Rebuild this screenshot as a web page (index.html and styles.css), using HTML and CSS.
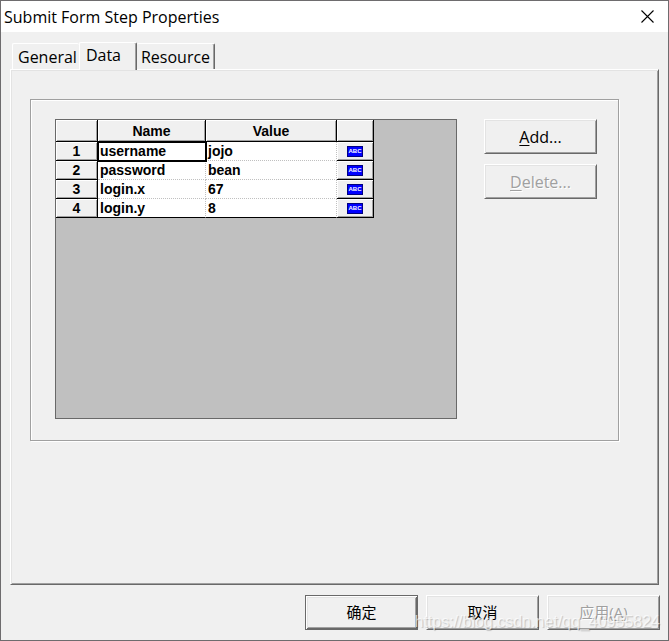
FILE: index.html
```html
<!DOCTYPE html>
<html lang="zh-CN">
  <head>
    <meta charset="UTF-8" />
    <meta name="viewport" content="width=device-width, initial-scale=1.0" />
    <title>Submit Form Step Properties</title>
    <link rel="stylesheet" href="styles.css">
  </head>
  <body>
    <div class="window">
      <header class="title-bar">
        <h1 class="title">Submit Form Step Properties</h1>
        <button type="button" class="close" aria-label="Close">
          <svg width="13" height="13" viewBox="0 0 13 13">
            <path d="M0.5 0.5 L12.5 12.5 M12.5 0.5 L0.5 12.5" fill="none" stroke="#000" stroke-width="1.1" />
          </svg>
        </button>
      </header>

      <main class="sheet">
        <div class="tabs" role="tablist">
          <button type="button" class="tab" role="tab">General</button>
          <button type="button" class="tab active" role="tab" aria-selected="true">Data</button>
          <button type="button" class="tab" role="tab">Resource</button>
        </div>

        <section class="panel" role="tabpanel">
          <div class="group">
            <div class="grid-view">
              <table class="grid">
                <colgroup>
                  <col class="col-index" />
                  <col class="col-name" />
                  <col class="col-value" />
                  <col class="col-type" />
                </colgroup>
                <thead>
                  <tr>
                    <th></th>
                    <th>Name</th>
                    <th>Value</th>
                    <th></th>
                  </tr>
                </thead>
                <tbody>
                  <tr>
                    <th>1</th>
                    <td class="selected">username</td>
                    <td>jojo</td>
                    <th><span class="type-icon">ABC</span></th>
                  </tr>
                  <tr>
                    <th>2</th>
                    <td>password</td>
                    <td>bean</td>
                    <th><span class="type-icon">ABC</span></th>
                  </tr>
                  <tr>
                    <th>3</th>
                    <td>login.x</td>
                    <td>67</td>
                    <th><span class="type-icon">ABC</span></th>
                  </tr>
                  <tr>
                    <th>4</th>
                    <td>login.y</td>
                    <td>8</td>
                    <th><span class="type-icon">ABC</span></th>
                  </tr>
                </tbody>
              </table>
            </div>

            <div class="actions">
              <button type="button" class="btn"><span><u>A</u>dd...</span></button>
              <button type="button" class="btn" disabled><span><u>D</u>elete...</span></button>
            </div>
          </div>
        </section>
      </main>

      <footer class="footer">
        <button type="button" class="btn default">确定</button>
        <button type="button" class="btn">取消</button>
        <button type="button" class="btn" disabled><span>应用(<u>A</u>)</span></button>
      </footer>

      <div class="watermark">https://blog.csdn.net/qq_40955824</div>
    </div>
  </body>
</html>
```

FILE: styles.css
```css
* {
  margin: 0;
  padding: 0;
  box-sizing: border-box;
}

body {
  font-family: "Open Sans", "Noto Sans CJK SC", sans-serif;
  font-size: 16px;
  color: #000000;
  background: #f0f0f0;
}

button {
  font: inherit;
  color: inherit;
  background: #f0f0f0;
  border: none;
}

.window {
  display: flex;
  flex-direction: column;
  min-height: 100vh;
  border: 1px solid #6e6c6e;
  position: relative;
}

.title-bar {
  display: flex;
  justify-content: space-between;
  align-items: center;
  height: 31px;
  padding-left: 3px;
  background: #ffffff;
}

.title {
  font-size: 16px;
  font-weight: 400;
  line-height: 20px;
}

.close {
  display: flex;
  align-items: center;
  justify-content: center;
  width: 42px;
  height: 30px;
  background: #ffffff;
}

/* Property sheet */
.sheet {
  flex: 1;
  display: flex;
  flex-direction: column;
  padding: 10px 9px;
}

.tabs {
  display: flex;
  align-items: flex-end;
  padding-left: 2px;
}

.tab {
  height: 26px;
  padding: 0 2px 0 5px;
  line-height: 24px;
  border-top: 1px solid #ffffff;
  border-left: 1px solid #ffffff;
  border-radius: 2px 2px 0 0;
}

.tab:last-child {
  padding: 0 4px;
  border-left: none;
  border-right: 1px solid #696969;
  box-shadow: inset -1px 0 0 #a0a0a0;
}

.tab.active {
  height: 28px;
  padding: 0 15px 3px 6px;
  margin-bottom: -1px;
  border-right: 1px solid #696969;
  box-shadow: inset -1px 0 0 #a0a0a0;
  position: relative;
}

.panel {
  flex: 1;
  padding: 29px 39px 29px 19px;
  border: 1px solid;
  border-color: #ffffff #696969 #696969 #ffffff;
  box-shadow: inset 1px 1px 0 #e3e3e3, inset -1px -1px 0 #a0a0a0;
}

.group {
  display: flex;
  align-items: flex-start;
  gap: 27px;
  padding: 19px 21px 21px 24px;
  border: 1px solid #a0a0a0;
  box-shadow: 1px 1px 0 #ffffff, inset 1px 1px 0 #ffffff;
}

/* Data grid */
.grid-view {
  flex: 1;
  min-height: 300px;
  background: #c0c0c0;
  border: 1px solid #696969;
}

.grid {
  table-layout: fixed;
  width: 318px;
  border-collapse: separate;
  border-spacing: 0;
  font-family: "Liberation Sans", Arial, sans-serif;
  font-size: 14px;
  font-weight: 700;
  line-height: 18px;
}

.col-index {
  width: 42px;
}

.col-name {
  width: 108px;
}

.col-value {
  width: 131px;
}

.col-type {
  width: 37px;
}

.grid th {
  height: 19px;
  background: #f0f0f0;
  border-right: 1px solid #000000;
  border-bottom: 1px solid #000000;
  box-shadow: inset 1px 1px 0 #ffffff, inset -1px -1px 0 #a0a0a0;
}

.grid thead th {
  height: 22px;
}

.grid td {
  height: 19px;
  padding-left: 2px;
  background: #ffffff;
  border-right: 1px dotted #c0c0c0;
  border-bottom: 1px dotted #c0c0c0;
}

.grid tr:last-child td {
  border-bottom: 1px solid #000000;
}

.grid .selected {
  outline: 2px solid #000000;
  outline-offset: -1px;
}

.type-icon {
  display: block;
  width: 16px;
  height: 11px;
  margin: 0 auto;
  font-size: 6px;
  line-height: 9px;
  color: #ffffff;
  background: #0000ff;
  border: 1px solid #000080;
}

/* Buttons */
.actions {
  display: flex;
  flex-direction: column;
  gap: 10px;
}

.btn {
  width: 113px;
  height: 35px;
  border: 1px solid;
  border-color: #ffffff #696969 #696969 #ffffff;
  box-shadow: inset 1px 1px 0 #e3e3e3, inset -1px -1px 0 #a0a0a0;
}

.btn:disabled {
  color: #a0a0a0;
  text-shadow: 1px 1px 0 #ffffff;
}

.btn.default {
  border-color: #696969;
  box-shadow: inset 1px 1px 0 #ffffff, inset -1px -1px 0 #696969,
    inset 2px 2px 0 #e3e3e3, inset -2px -2px 0 #a0a0a0;
}

.btn u {
  text-underline-offset: 2px;
}

.footer {
  display: flex;
  justify-content: flex-end;
  gap: 8px;
  padding: 0 8px 10px;
}

.footer .btn {
  padding-bottom: 2px;
  font-size: 15px;
}

.watermark {
  position: absolute;
  right: 8px;
  bottom: 9px;
  font-family: "Liberation Sans", Arial, sans-serif;
  font-size: 16px;
  line-height: 18px;
  color: rgba(255, 255, 255, 0.7);
  text-shadow: 1px 1px 1px rgba(0, 0, 0, 0.2);
  pointer-events: none;
}
```
